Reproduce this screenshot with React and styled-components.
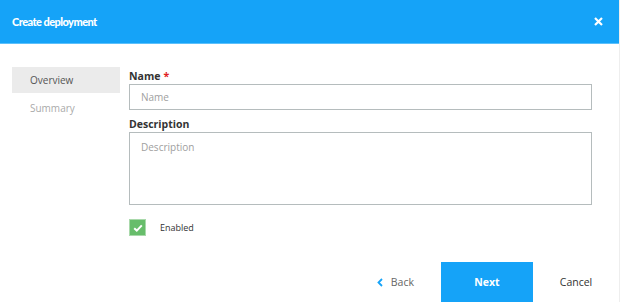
import React from 'react';
import styled, { createGlobalStyle } from 'styled-components';

const GlobalStyle = createGlobalStyle`
    body {
        margin: 0;
        background: #fff;
        font-family: "Open Sans", "Noto Sans", sans-serif;
    }
`

const Dialog = styled.div`
    width: 620px;
    height: 302px;
    display: flex;
    flex-direction: column;
    overflow: hidden;
    border-right: 1px solid #eee;
    box-sizing: border-box;
`

const Header = styled.div`
    height: 43px;
    flex-shrink: 0;
    background: #15a3f8;
    border-bottom: 1px solid #5cc0fb;
    display: flex;
    align-items: center;
    justify-content: space-between;
    padding: 0 14px 0 12px;
    color: #fff;
`

const Title = styled.div`
    font-family: Lato, "Open Sans", sans-serif;
    font-size: 11px;
    font-weight: 900;
    letter-spacing: -0.55px;
`

const Close = styled.button`
    border: 0;
    background: none;
    padding: 0;
    width: 14px;
    height: 14px;
    display: flex;
    align-items: center;
    justify-content: center;
    cursor: pointer;
`

const Body = styled.div`
    flex: 1;
    display: flex;
    padding: 23px 27px 0 12px;
    gap: 9px;
`

const Sidebar = styled.div`
    width: 108px;
    flex-shrink: 0;
    display: flex;
    flex-direction: column;
`

const NavItem = styled.div`
    height: 26px;
    line-height: 26px;
    padding-left: 18px;
    font-size: 10px;
    background: ${p => (p.$active ? '#ebebeb' : 'transparent')};
    color: ${p => (p.$active ? '#555' : '#aaa')};
    margin-bottom: 2px;
`

const Form = styled.div`
    flex: 1;
    display: flex;
    flex-direction: column;
`

const Label = styled.label`
    font-size: 10.5px;
    font-weight: 700;
    color: #333;
    line-height: 16px;
    margin-top: ${p => p.$gap || 0}px;
`

const Required = styled.span`
    color: #e02020;
    margin-left: 3px;
`

const Input = styled.input`
    height: 26px;
    box-sizing: border-box;
    border: 1px solid #b5bcbd;
    padding: 0 11px;
    font-family: inherit;
    font-size: 10px;
    outline: none;
    &::placeholder { color: #a0a0a0; }
`

const TextArea = styled.textarea`
    height: 73px;
    box-sizing: border-box;
    border: 1px solid #b5bcbd;
    padding: 7px 11px;
    font-family: inherit;
    font-size: 10px;
    resize: none;
    outline: none;
    &::placeholder { color: #a0a0a0; }
`

const CheckRow = styled.div`
    display: flex;
    align-items: center;
    margin-top: 14px;
    gap: 14px;
`

const Check = styled.div`
    width: 17px;
    height: 17px;
    box-sizing: border-box;
    background: #67bd6b;
    border: 1px solid #a9d9ab;
    display: flex;
    align-items: center;
    justify-content: center;
`

const CheckLabel = styled.span`
    font-size: 9px;
    font-weight: 500;
    color: #333;
`

const Footer = styled.div`
    margin-top: auto;
    height: 40px;
    display: flex;
    justify-content: flex-end;
    margin-right: -27px;
`

const FooterButton = styled.button`
    border: 0;
    height: 40px;
    font-family: inherit;
    font-size: 10.5px;
    display: flex;
    align-items: center;
    justify-content: center;
    gap: 8px;
    cursor: pointer;
    padding: ${p => p.$pad || '0'};
    background: ${p => (p.$primary ? '#15a3f8' : 'transparent')};
    color: ${p => (p.$primary ? '#fff' : p.$muted ? '#666' : '#333')};
    font-weight: ${p => (p.$primary ? 700 : 400)};
    width: ${p => (p.$w ? p.$w + 'px' : 'auto')};
`

export default function App() {
    return (
        <>
            <GlobalStyle />
            <Dialog>
                <Header>
                    <Title>Create deployment</Title>
                    <Close>
                        <svg width="9" height="9" viewBox="0 0 9 9">
                            <path d="M1 1L8 8M8 1L1 8" stroke="#fff" strokeWidth="2.2" />
                        </svg>
                    </Close>
                </Header>
                <Body>
                    <Sidebar>
                        <NavItem $active>Overview</NavItem>
                        <NavItem>Summary</NavItem>
                    </Sidebar>
                    <Form>
                        <Label $gap={1}>Name<Required>*</Required></Label>
                        <Input placeholder="Name" />
                        <Label $gap={6}>Description</Label>
                        <TextArea placeholder="Description" />
                        <CheckRow>
                            <Check>
                                <svg width="10" height="8" viewBox="0 0 10 8">
                                    <path d="M1.2 4.2L3.8 6.6L8.8 1.4" stroke="#fff" strokeWidth="2" fill="none" />
                                </svg>
                            </Check>
                            <CheckLabel>Enabled</CheckLabel>
                        </CheckRow>
                        <Footer>
                            <FooterButton $muted $pad="0 27px 0 0">
                                <svg width="6" height="9" viewBox="0 0 6 9">
                                    <path d="M5 1L1.5 4.5L5 8" stroke="#15a3f8" strokeWidth="1.8" fill="none" />
                                </svg>
                                Back
                            </FooterButton>
                            <FooterButton $primary $w={92}>Next</FooterButton>
                            <FooterButton $w={86}>Cancel</FooterButton>
                        </Footer>
                    </Form>
                </Body>
            </Dialog>
        </>
    );
}
